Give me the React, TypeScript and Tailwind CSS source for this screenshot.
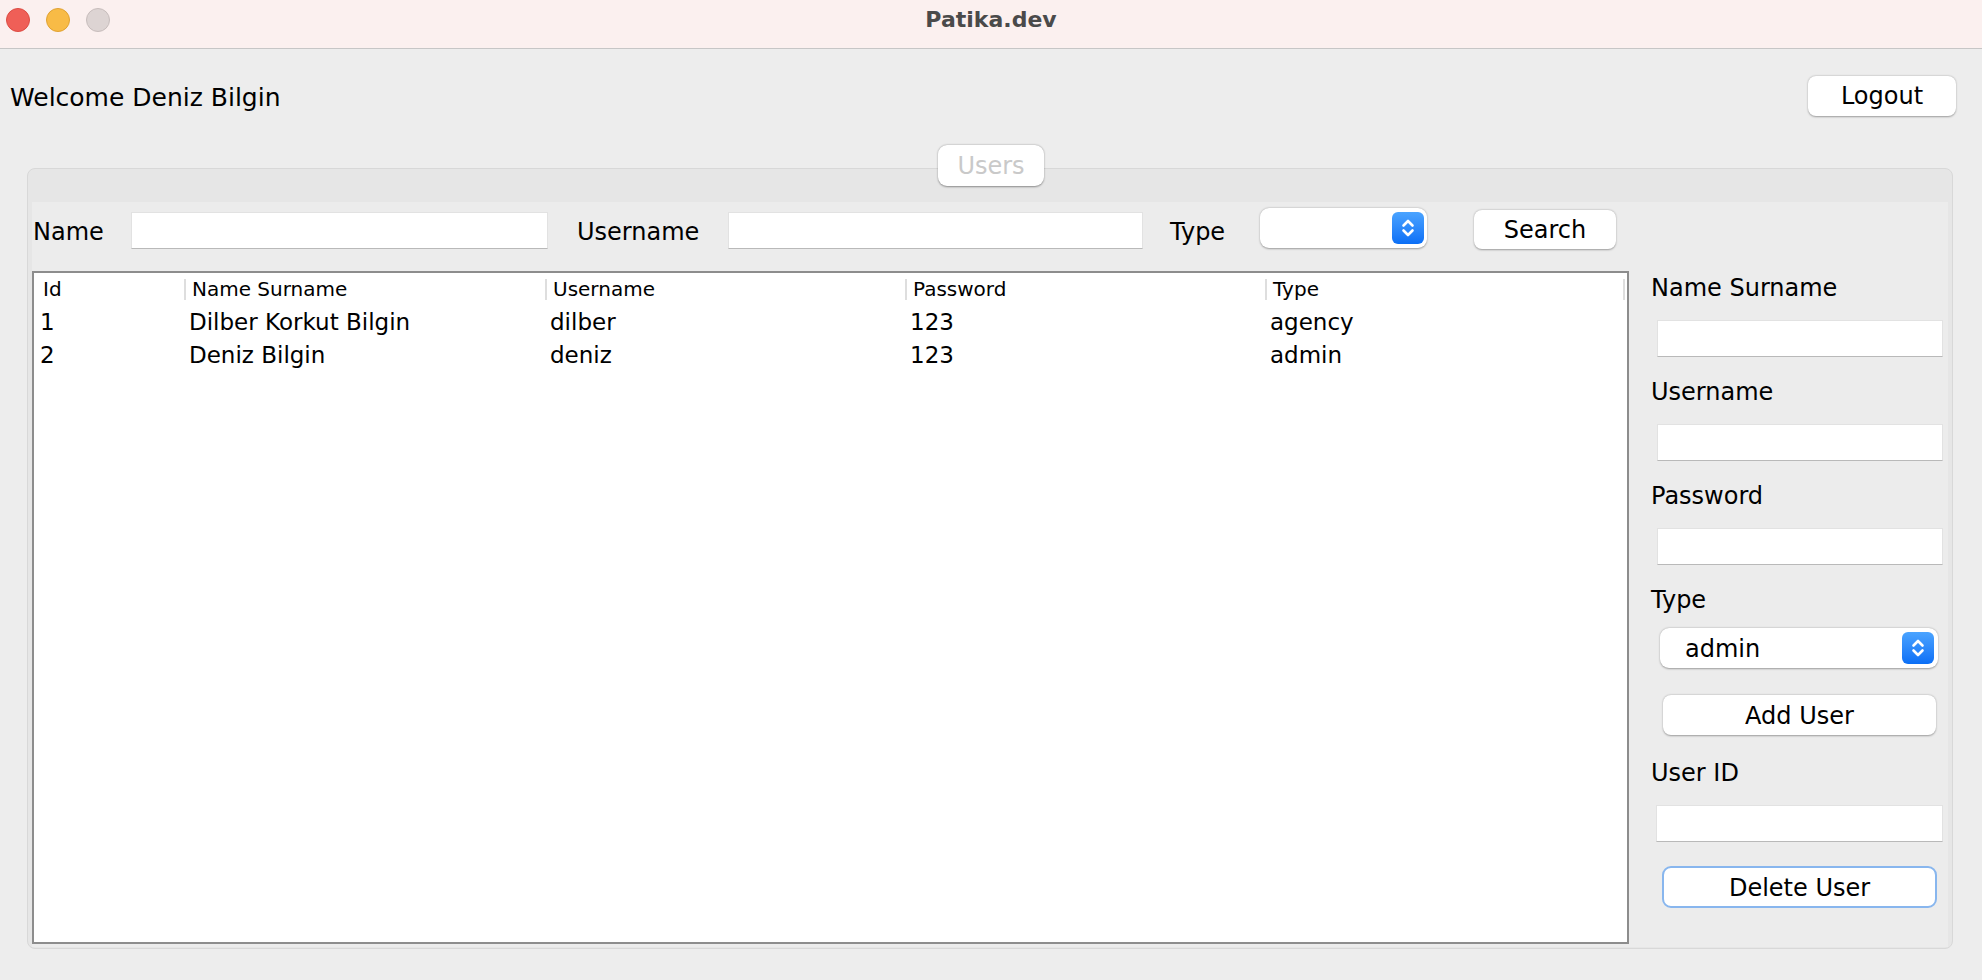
import React from "react";

const Stepper = () => (
  <div className="w-[32px] h-[32px] rounded-[6px] bg-gradient-to-b from-[#4aa3ff] to-[#0a6ff6] flex items-center justify-center">
    <svg width="32" height="32" viewBox="0 0 32 32" fill="none">
      <path d="M11.5 13.5 L16 9 L20.5 13.5" stroke="white" strokeWidth="2.6" strokeLinecap="round" strokeLinejoin="round" />
      <path d="M11.5 18.5 L16 23 L20.5 18.5" stroke="white" strokeWidth="2.6" strokeLinecap="round" strokeLinejoin="round" />
    </svg>
  </div>
);

const inputCls = "bg-white border border-[#e2e2e2] border-b-[#b9b9b9]";
const btnCls =
  "bg-white rounded-[8px] shadow-[0_0.5px_2px_rgba(0,0,0,0.35)] flex items-center justify-center text-[24px] text-black";
const labelCls = "ml-[22px] h-[30px] pt-[4px] leading-[26px]";

const cols = [150, 361, 360, 360, 360];
const headers = ["Id", "Name Surname", "Username", "Password", "Type"];
const rows = [
  ["1", "Dilber Korkut Bilgin", "dilber", "123", "agency"],
  ["2", "Deniz Bilgin", "deniz", "123", "admin"],
];

export default function App() {
  return (
    <div className="w-[1982px] h-[980px] bg-[#ededed] font-['DejaVu_Sans',sans-serif] text-black overflow-hidden">
      {/* Title bar */}
      <div className="h-[49px] bg-[#fbf0ef] border-b border-[#c6c6c6] grid grid-cols-[1fr_auto_1fr]">
        <div className="flex items-start pt-[8px] pl-[6px] gap-[16px]">
          <div className="w-[24px] h-[24px] rounded-full bg-[#ef5f57] border border-[#dc4c43]" />
          <div className="w-[24px] h-[24px] rounded-full bg-[#f8bb46] border border-[#e0a232]" />
          <div className="w-[24px] h-[24px] rounded-full bg-[#ddd4d3] border border-[#c7bdbc]" />
        </div>
        <div className="text-[22px] font-bold text-[#4a4a4a] leading-[38px] pt-[1px]">Patika.dev</div>
        <div />
      </div>

      {/* Welcome row */}
      <div className="flex items-center justify-between pt-[27px] pl-[10px] pr-[26px]">
        <div className="text-[25px] h-[40px] pt-[2px] leading-[40px]">Welcome Deniz Bilgin</div>
        <div className={`${btnCls} w-[148px] h-[40px]`}>Logout</div>
      </div>

      {/* Tab */}
      <div className="relative z-10 flex justify-center mt-[29px] -mb-[18px] h-[41px]">
        <div className="w-[106px] h-[41px] bg-white rounded-[9px] shadow-[0_0.5px_2px_rgba(0,0,0,0.4)] flex items-center justify-center text-[24px] text-[#c9c9c9] [text-shadow:0_1px_0_#ffffff]">
          Users
        </div>
      </div>

      {/* Panel */}
      <div className="ml-[27px] mr-[29px] h-[781px] rounded-[8px] border border-[#d8d8d8] bg-[#e6e6e6] pt-[33px] pl-[4px] pr-[4px] pb-[1px] flex flex-col">
        <div className="flex-1 bg-[#ececec] flex flex-col">
          {/* Search row */}
          <div className="flex items-start pt-[6px] h-[48px] text-[24px]">
            <div className="ml-[1px] w-[98px] h-[42px] pt-[3px] leading-[42px]">Name</div>
            <div className={`${inputCls} mt-[4px] w-[417px] h-[37px]`} />
            <div className="ml-[29px] w-[151px] h-[42px] pt-[3px] leading-[42px]">Username</div>
            <div className={`${inputCls} mt-[4px] w-[415px] h-[37px]`} />
            <div className="ml-[27px] w-[90px] h-[42px] pt-[3px] leading-[42px]">Type</div>
            <div className="w-[167px] h-[40px] bg-white rounded-[9px] shadow-[0_0.5px_2px_rgba(0,0,0,0.35)] flex items-center justify-end pr-[3px]">
              <Stepper />
            </div>
            <div className={`${btnCls} ml-[47px] mt-[2px] w-[142px] h-[39px]`}>Search</div>
          </div>

          {/* Body */}
          <div className="flex mt-[21px]">
            {/* Table */}
            <div className="w-[1597px] h-[673px] border-2 border-[#8d8d8d] bg-white flex flex-col">
              <div className="flex h-[32px] text-[20px]">
                {headers.map((h, i) => (
                  <div key={h} className="flex items-center" style={{ width: cols[i] }}>
                    {i > 0 && <span className="w-[2px] h-[21px] bg-[#dedede]" />}
                    <span className={i === 0 ? "pl-[9px]" : "pl-[6px]"}>{h}</span>
                    {i === 4 && <span className="ml-auto w-[2px] h-[21px] bg-[#dedede]" />}
                  </div>
                ))}
              </div>
              {rows.map((r) => (
                <div key={r[0]} className="flex h-[33px] text-[23px] pt-[1px] leading-[33px]">
                  {r.map((c, i) => (
                    <div key={i} className={i === 0 ? "pl-[6px]" : "pl-[5px]"} style={{ width: cols[i] }}>
                      {c}
                    </div>
                  ))}
                </div>
              ))}
            </div>

            {/* Right form */}
            <div className="flex flex-col text-[24px]">
              <div className={labelCls}>Name Surname</div>
              <div className={`${inputCls} ml-[28px] mt-[19px] w-[286px] h-[37px]`} />
              <div className={`${labelCls} mt-[18px]`}>Username</div>
              <div className={`${inputCls} ml-[28px] mt-[19px] w-[286px] h-[37px]`} />
              <div className={`${labelCls} mt-[18px]`}>Password</div>
              <div className={`${inputCls} ml-[28px] mt-[19px] w-[286px] h-[37px]`} />
              <div className={`${labelCls} mt-[18px]`}>Type</div>
              <div className="ml-[31px] mt-[15px] w-[278px] h-[40px] bg-white rounded-[9px] shadow-[0_0.5px_2px_rgba(0,0,0,0.35)] flex items-center pl-[25px] pr-[4px]">
                <span className="flex-1 pt-[2px]">admin</span>
                <Stepper />
              </div>
              <div className={`${btnCls} ml-[34px] mt-[27px] w-[273px] h-[40px] pt-[2px]`}>Add User</div>
              <div className={`${labelCls} mt-[21px]`}>User ID</div>
              <div className={`${inputCls} ml-[27px] mt-[19px] w-[287px] h-[37px]`} />
              <div className="ml-[33px] mt-[24px] w-[275px] h-[42px] pt-[2px] bg-white rounded-[9px] border-2 border-[#88b6ee] flex items-center justify-center text-[24px]">
                Delete User
              </div>
            </div>
          </div>
        </div>
      </div>
    </div>
  );
}
